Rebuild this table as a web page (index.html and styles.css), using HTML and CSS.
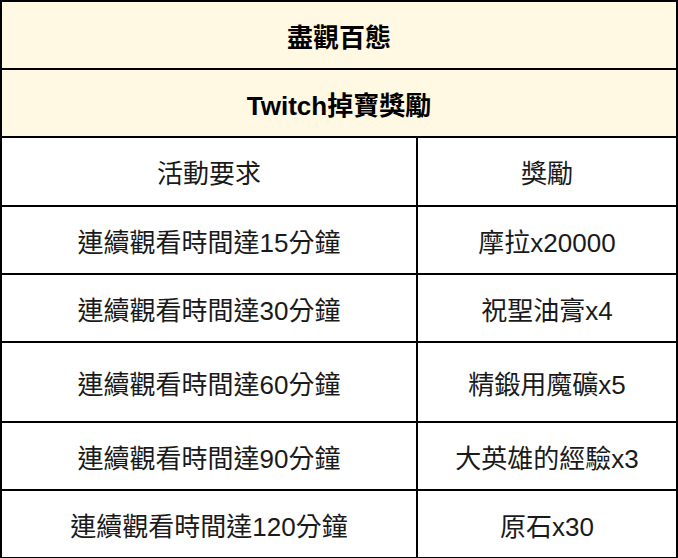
FILE: index.html
```html
<!DOCTYPE html>
<html lang="zh-Hant">
<head>
<meta charset="utf-8">
<link rel="stylesheet" href="styles.css">
</head>
<body>
<table class="rewards">
  <colgroup>
    <col class="col-req">
    <col class="col-prize">
  </colgroup>
  <tr class="head"><th colspan="2">盡觀百態</th></tr>
  <tr class="head"><th colspan="2">Twitch掉寶獎勵</th></tr>
  <tr class="row-69"><td>活動要求</td><td>獎勵</td></tr>
  <tr><td>連續觀看時間達15分鐘</td><td>摩拉x20000</td></tr>
  <tr><td>連續觀看時間達30分鐘</td><td>祝聖油膏x4</td></tr>
  <tr class="row-tall"><td>連續觀看時間達60分鐘</td><td>精鍛用魔礦x5</td></tr>
  <tr><td>連續觀看時間達90分鐘</td><td>大英雄的經驗x3</td></tr>
  <tr><td>連續觀看時間達120分鐘</td><td>原石x30</td></tr>
</table>
</body>
</html>
```

FILE: styles.css
```css
html, body {
  margin: 0;
  padding: 0;
  background: #ffffff;
}

.rewards {
  width: 678px;
  border-collapse: collapse;
  table-layout: fixed;
  font-family: "Liberation Sans", "Noto Sans CJK TC", sans-serif;
  font-size: 26px;
  color: #1a1a1a;
}

.col-req {
  width: 416px;
}

.rewards th,
.rewards td {
  border: 2px solid #000000;
  height: 66px;
  padding: 0;
  text-align: center;
  vertical-align: middle;
}

.rewards .head th {
  background: #fff8e3;
  font-weight: bold;
  color: #000000;
}

.rewards .row-69 td {
  height: 67px;
}

.rewards .row-tall td {
  height: 78px;
}
```
